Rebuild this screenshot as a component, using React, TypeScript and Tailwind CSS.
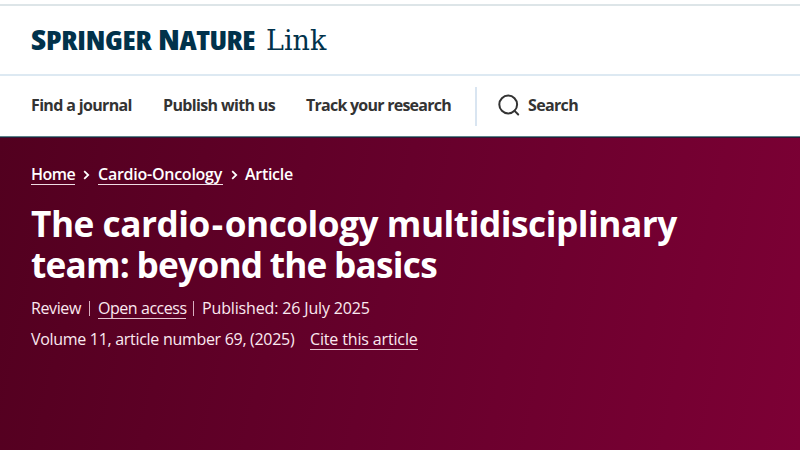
function Logo() {
  return (
    <a className="flex items-baseline text-[#01324b]">
      <span className="w-[127px]">
        <span className="inline-block origin-left scale-x-[1.15] text-[26px] leading-8 font-extrabold tracking-[-0.2px] font-stretch-condensed">
          <span className="text-[29px]">S</span>PRINGER
        </span>
      </span>
      <span className="w-[108px]">
        <span className="inline-block origin-left scale-x-[1.15] text-[26px] leading-8 font-extrabold tracking-[-0.4px] font-stretch-condensed">
          <span className="text-[29px]">N</span>ATURE
        </span>
      </span>
      <span className="font-['DejaVu_Serif',serif] text-[27px] leading-8">Link</span>
    </a>
  );
}

function SearchIcon() {
  return (
    <svg className="size-6" viewBox="0 0 24 24" fill="none" stroke="currentColor" strokeWidth="2" strokeLinecap="round">
      <circle cx="11.2" cy="11.5" r="8.9" />
      <path d="m17.6 17.9 3.6 3.6" />
    </svg>
  );
}

function Chevron() {
  return (
    <svg className="mt-[7px] h-[10px] w-[7px]" viewBox="0 0 7 10" fill="none" stroke="white" strokeWidth="1.8">
      <path d="M1.2 1.2 5.2 5 1.2 8.8" />
    </svg>
  );
}

export default function App() {
  return (
    <div className="flex h-[450px] w-[800px] flex-col overflow-hidden bg-white font-['Open_Sans','Noto_Sans',sans-serif] whitespace-nowrap">
      <div className="h-[4px] shrink-0" />
      <header className="flex h-[72px] shrink-0 items-center border-t-2 border-b-2 border-t-[#dde5e8] border-b-[#dde9f2] pl-[31px]">
        <Logo />
      </header>
      <nav className="flex h-[61px] shrink-0 items-center border-b border-[#5d8389] pl-[31px] text-[16px] font-bold text-[#333]">
        <a className="mb-0.5 w-[132px] tracking-[-0.65px]">Find a journal</a>
        <a className="mb-0.5 w-[143px] tracking-[-0.65px]">Publish with us</a>
        <a className="mb-0.5 w-[169px] tracking-[-0.75px]">Track your research</a>
        <span className="h-[39px] w-[2px] bg-[#d9e5f1]" />
        <a className="mb-0.5 ml-5 flex items-center gap-[7px] tracking-[-0.65px]">
          <SearchIcon />
          Search
        </a>
      </nav>
      <main className="flex-1 border-t border-[#2c1a38] bg-linear-[102deg,#52001f_0%,#66002b_48%,#7d0035_100%] pt-[25px] pl-[31px] text-white">
        <div className="flex h-6 text-[16px] leading-[22px] font-semibold">
          <a className="h-[22px] w-[44px] border-b border-[#f0dbe3] tracking-[-0.5px]">Home</a>
          <span className="ml-2 w-[15px]">
            <Chevron />
          </span>
          <a className="h-[22px] w-[125px] border-b border-[#f0dbe3] tracking-[-0.25px]">Cardio-Oncology</a>
          <span className="ml-2 w-[14px]">
            <Chevron />
          </span>
          <span className="tracking-[-0.3px]">Article</span>
        </div>
        <h1 className="mt-[16px] origin-left scale-x-[0.965] text-[36.5px] leading-[41px] font-bold">
          <span className="block tracking-[-0.5px]">
            The cardio<span className="px-[2px]">-</span>oncology multidisciplinary
          </span>
          <span className="block tracking-[-0.8px] [word-spacing:-1px]">team: beyond the basics</span>
        </h1>
        <div className="mt-[13px] flex h-[31px] text-[16px] leading-[21px] text-[#fbe9f0]">
          <span className="w-[58px] tracking-[-0.4px]">Review</span>
          <span className="mt-[3px] mr-2 h-[15px] w-px bg-[#d9aebf]" />
          <a className="h-[21px] w-[88px] border-b border-[#e5c3d0] tracking-[-0.45px]">Open access</a>
          <span className="mt-[3px] mr-2 ml-[7px] h-[15px] w-px bg-[#d9aebf]" />
          <span className="tracking-[-0.15px]">Published: 26 July 2025</span>
        </div>
        <div className="flex text-[16px] leading-[21px] text-[#fbe9f0]">
          <span className="w-[279px] tracking-[-0.3px]">Volume 11, article number 69, (2025)</span>
          <a className="h-[21px] w-[108px] border-b border-[#e5c3d0] tracking-[-0.15px]">Cite this article</a>
        </div>
      </main>
    </div>
  );
}
